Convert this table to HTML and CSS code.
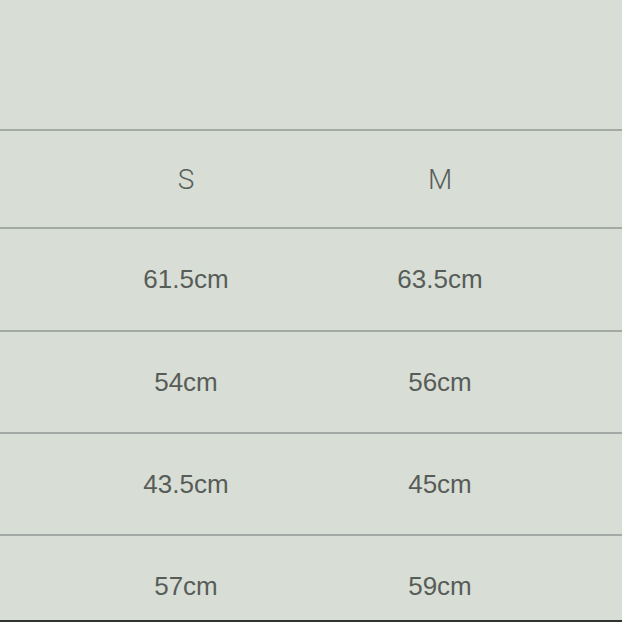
FILE: index.html
```html
<!DOCTYPE html>
<html>
<head>
<meta charset="utf-8">
<link rel="stylesheet" href="styles.css">
</head>
<body>
<div class="page">
  <div class="top"></div>
  <div class="table">
    <div class="row r1 head"><div class="cell">S</div><div class="cell">M</div></div>
    <div class="row r2"><div class="cell">61.5cm</div><div class="cell">63.5cm</div></div>
    <div class="row r3"><div class="cell">54cm</div><div class="cell">56cm</div></div>
    <div class="row r4"><div class="cell">43.5cm</div><div class="cell">45cm</div></div>
    <div class="row r5"><div class="cell">57cm</div><div class="cell">59cm</div></div>
  </div>
</div>
</body>
</html>
```
FILE: styles.css
```css
html, body {
  margin: 0;
  padding: 0;
  background: #d8ded5;
}
.page {
  width: 622px;
  height: 622px;
  overflow: hidden;
  display: flex;
  flex-direction: column;
  background: #d8ded5;
  font-family: "Liberation Sans", Arial, sans-serif;
  color: #575c59;
}
.top {
  height: 129px;
  flex: none;
}
.table {
  display: flex;
  flex-direction: column;
  border-bottom: 2px solid #2f3330;
}
.row {
  display: grid;
  grid-template-columns: 254px 254px;
  padding-left: 59px;
  border-top: 2px solid #a3a9a5;
  align-items: center;
  font-size: 26px;
  box-sizing: border-box;
}
.head {
  font-family: Roboto, "Liberation Sans", sans-serif;
  font-weight: 300;
  font-size: 28px;
  color: #5a5f5c;
}
.cell {
  text-align: center;
}
.r1 { height: 98px; }
.r2 { height: 103px; }
.r3 { height: 102px; }
.r4 { height: 102px; }
.r5 { height: 86px; padding-top: 16px; }
```
